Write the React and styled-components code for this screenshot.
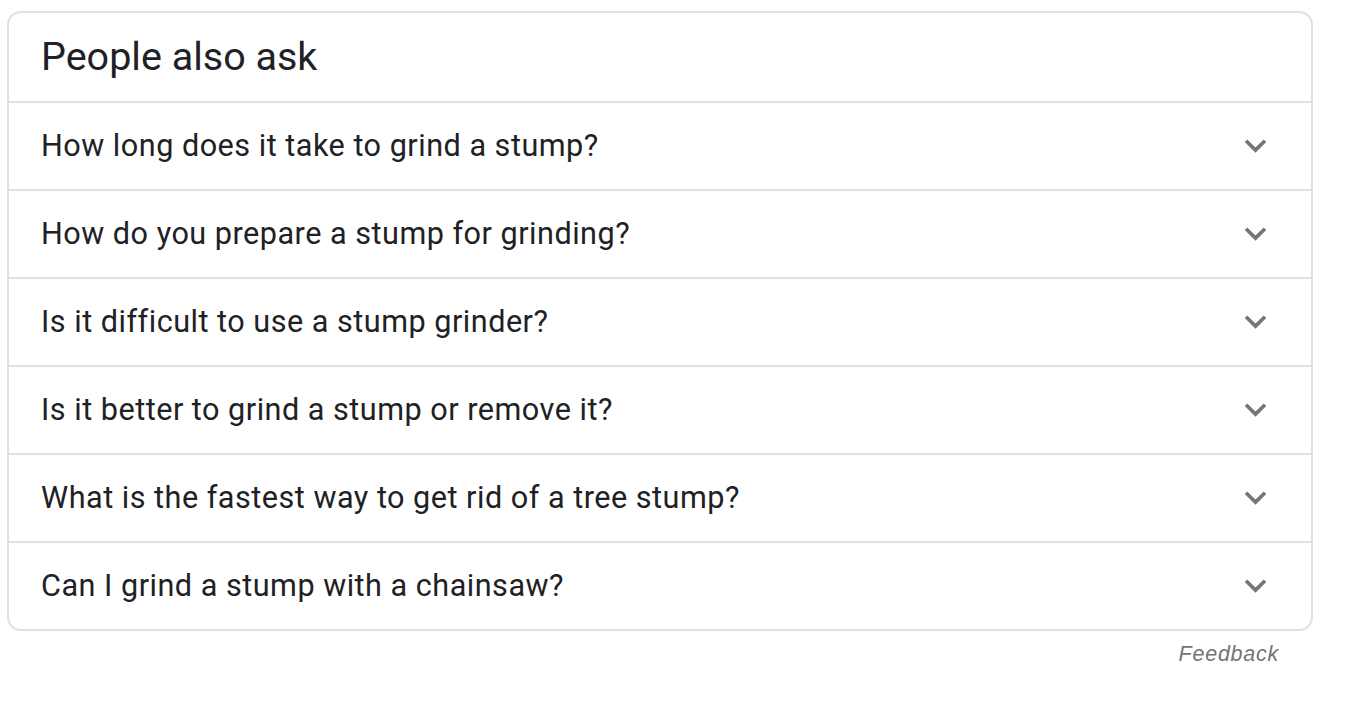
import React from 'react'
import styled, { createGlobalStyle } from 'styled-components'

const GlobalStyle = createGlobalStyle`
  body {
    margin: 0;
    background: #fff;
    font-family: Roboto, "Liberation Sans", Arial, sans-serif;
  }
`

const Page = styled.div`
  padding: 11px 0 0 7px;
  width: 1306px;
`

const Card = styled.div`
  border: 2px solid #dfe1e5;
  border-radius: 14px;
  overflow: hidden;
  background: #fff;
`

const Header = styled.div`
  height: 88px;
  display: flex;
  align-items: center;
  padding: 0 32px 2px;
  font-size: 39.5px;
  color: #202124;
  box-sizing: border-box;
`

const Row = styled.div`
  height: 88px;
  box-sizing: border-box;
  border-top: 2px solid #dfe1e5;
  display: flex;
  align-items: center;
  justify-content: space-between;
  padding: 0 34px 2px 32px;
  cursor: pointer;
`

const Question = styled.span`
  font-size: 30.6px;
  letter-spacing: 0.5px;
  color: #202124;
`

const Chevron = styled.svg`
  width: 43px;
  height: 43px;
  fill: #70757a;
  flex: none;
`

const FeedbackBar = styled.div`
  display: flex;
  justify-content: flex-end;
  padding: 11px 34px 0 0;
`

const Feedback = styled.span`
  font-family: "Liberation Sans", Arial, sans-serif;
  font-size: 21.5px;
  letter-spacing: 0.75px;
  font-style: italic;
  color: #70757a;
`

const questions = [
  'How long does it take to grind a stump?',
  'How do you prepare a stump for grinding?',
  'Is it difficult to use a stump grinder?',
  'Is it better to grind a stump or remove it?',
  'What is the fastest way to get rid of a tree stump?',
  'Can I grind a stump with a chainsaw?',
]

const App = () => (
  <Page>
    <GlobalStyle />
    <Card>
      <Header>People also ask</Header>
      {questions.map(q => (
        <Row key={q}>
          <Question>{q}</Question>
          <Chevron viewBox="0 0 24 24">
            <path d="M16.59 8.59L12 13.17 7.41 8.59 6 10l6 6 6-6z" />
          </Chevron>
        </Row>
      ))}
    </Card>
    <FeedbackBar>
      <Feedback>Feedback</Feedback>
    </FeedbackBar>
  </Page>
)

export default App
